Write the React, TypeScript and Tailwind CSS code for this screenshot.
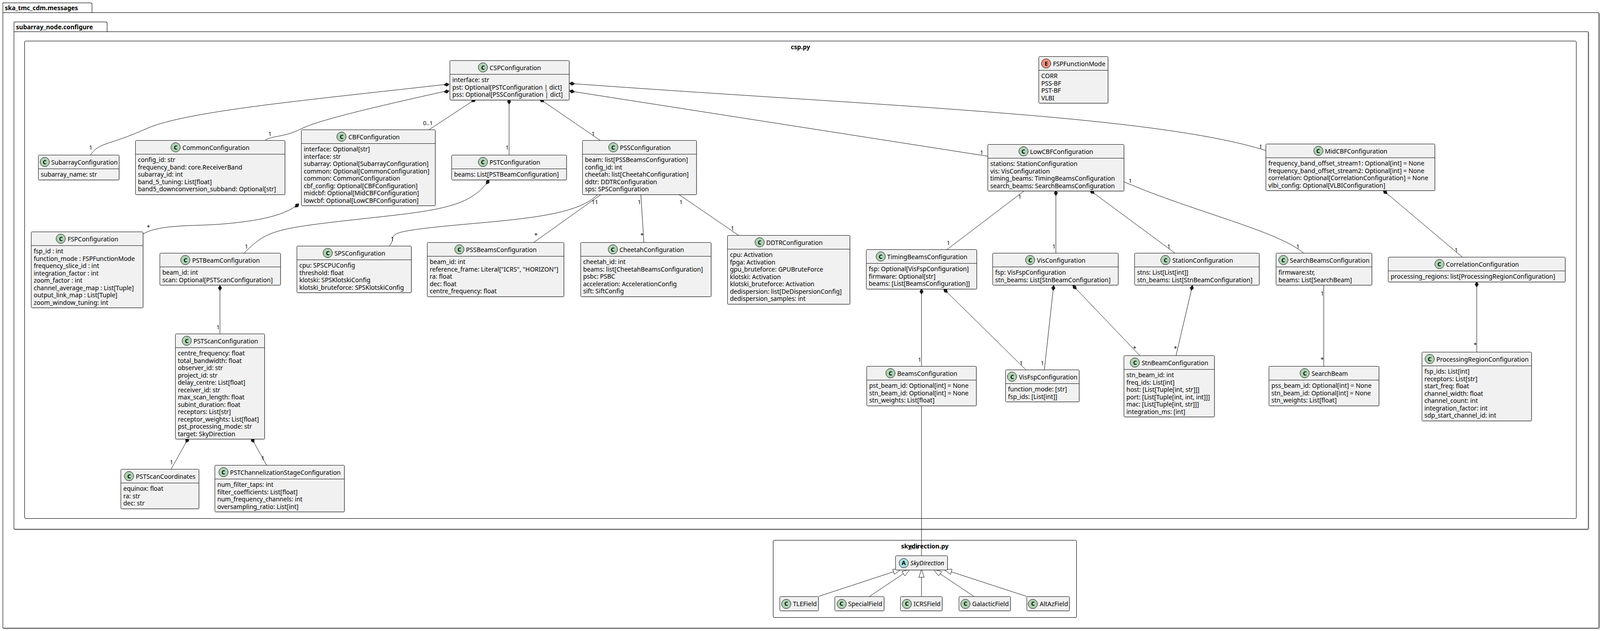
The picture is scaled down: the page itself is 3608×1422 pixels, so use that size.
import React from "react";

type Cls = { name: string; x: number; y: number; w: number; rows: string[]; kind?: "C" | "E" | "A" };

const classes: Cls[] = [
  { name: "CSPConfiguration", x: 1014, y: 136, w: 270, rows: ["interface: str", "pst: Optional[PSTConfiguration | dict]", "pss: Optional[PSSConfiguration | dict]"] },
  { name: "SubarrayConfiguration", x: 86, y: 349, w: 183, rows: ["subarray_name: str"] },
  { name: "CommonConfiguration", x: 305, y: 316, w: 338, rows: ["config_id: str", "frequency_band: core.ReceiverBand", "subarray_id: int", "band_5_tuning: List[float]", "band5_downconversion_subband: Optional[str]"] },
  { name: "CBFConfiguration", x: 679, y: 292, w: 303, rows: ["interface: Optional[str]", "interface: str", "subarray: Optional[SubarrayConfiguration]", "common: Optional[CommonConfiguration]", "common: CommonConfiguration", "cbf_config: Optional[CBFConfiguration]", "midcbf: Optional[MidCBFConfiguration]", "lowcbf: Optional[LowCBFConfiguration]"] },
  { name: "PSTConfiguration", x: 1018, y: 349, w: 260, rows: ["beams: List[PSTBeamConfiguration]"] },
  { name: "PSSConfiguration", x: 1313, y: 316, w: 258, rows: ["beam: list[PSSBeamsConfiguration]", "config_id: int", "cheetah: list[CheetahConfiguration]", "ddtr: DDTRConfiguration", "sps: SPSConfiguration"] },
  { name: "LowCBFConfiguration", x: 2227, y: 325, w: 308, rows: ["stations: StationConfiguration", "vis: VisConfiguration", "timing_beams: TimingBeamsConfiguration", "search_beams: SearchBeamsConfiguration"] },
  { name: "FSPFunctionMode", x: 2342, y: 127, w: 157, kind: "E", rows: ["CORR", "PSS-BF", "PST-BF", "VLBI"] },
  { name: "MidCBFConfiguration", x: 2854, y: 324, w: 382, rows: ["frequency_band_offset_stream1: Optional[int] = None", "frequency_band_offset_stream2: Optional[int] = None", "correlation: Optional[CorrelationConfiguration] = None", "vlbi_config: Optional[VLBIConfiguration]"] },
  { name: "FSPConfiguration", x: 70, y: 522, w: 253, rows: ["fsp_id : int", "function_mode : FSPFunctionMode", "frequency_slice_id : int", "integration_factor : int", "zoom_factor : int", "channel_average_map : List[Tuple]", "output_link_map : List[Tuple]", "zoom_window_tuning: int"] },
  { name: "PSTBeamConfiguration", x: 360, y: 570, w: 273, rows: ["beam_id: int", "scan: Optional[PSTScanConfiguration]"] },
  { name: "SPSConfiguration", x: 669, y: 554, w: 259, rows: ["cpu: SPSCPUConfig", "threshold: float", "klotski: SPSKlotskiConfig", "klotski_bruteforce: SPSKlotskiConfig"] },
  { name: "PSSBeamsConfiguration", x: 963, y: 546, w: 309, rows: ["beam_id: int", 'reference_frame: Literal["ICRS", "HORIZON"]', "ra: float", "dec: float", "centre_frequency: float"] },
  { name: "CheetahConfiguration", x: 1309, y: 546, w: 295, rows: ["cheetah_id: int", "beams: list[CheetahBeamsConfiguration]", "psbc: PSBC", "acceleration: AccelerationConfig", "sift: SiftConfig"] },
  { name: "DDTRConfiguration", x: 1640, y: 530, w: 277, rows: ["cpu: Activation", "fpga: Activation", "gpu_bruteforce: GPUBruteForce", "klotski: Activation", "klotski_bruteforce: Activation", "dedispersion: list[DeDispersionConfig]", "dedispersion_samples: int"] },
  { name: "TimingBeamsConfiguration", x: 1953, y: 562, w: 250, rows: ["fsp: Optional[VisFspConfiguration]", "firmware: Optional[str]", "beams: [List[BeamsConfiguration]]"] },
  { name: "VisConfiguration", x: 2238, y: 570, w: 284, rows: ["fsp: VisFspConfiguration", "stn_beams: List[StnBeamConfiguration]"] },
  { name: "StationConfiguration", x: 2558, y: 570, w: 282, rows: ["stns: List[List[int]]", "stn_beams: List[StnBeamConfiguration]"] },
  { name: "SearchBeamsConfiguration", x: 2877, y: 570, w: 217, rows: ["firmware:str,", "beams: List[SearchBeam]"] },
  { name: "CorrelationConfiguration", x: 3130, y: 579, w: 400, rows: ["processing_regions: list[ProcessingRegionConfiguration]"] },
  { name: "PSTScanConfiguration", x: 395, y: 752, w: 202, rows: ["centre_frequency: float", "total_bandwidth: float", "observer_id: str", "project_id: str", "delay_centre: List[float]", "receiver_id: str", "max_scan_length: float", "subint_duration: float", "receptors: List[str]", "receptor_weights: List[float]", "pst_processing_mode: str", "target: SkyDirection"] },
  { name: "BeamsConfiguration", x: 1954, y: 825, w: 248, rows: ["pst_beam_id: Optional[int] = None", "stn_beam_id: Optional[int] = None", "stn_weights: List[float]"] },
  { name: "VisFspConfiguration", x: 2267, y: 833, w: 167, rows: ["function_mode: [str]", "fsp_ids: [List[int]]"] },
  { name: "StnBeamConfiguration", x: 2534, y: 801, w: 205, rows: ["stn_beam_id: int", "freq_ids: List[int]", "host: [List[Tuple[int, str]]]", "port: [List[Tuple[int, int, int]]]", "mac: [List[Tuple[int, str]]]", "integration_ms: [int]"] },
  { name: "SearchBeam", x: 2861, y: 825, w: 249, rows: ["pss_beam_id: Optional[int] = None", "stn_beam_id: Optional[int] = None", "stn_weights: List[float]"] },
  { name: "ProcessingRegionConfiguration", x: 3206, y: 793, w: 248, rows: ["fsp_ids: List[int]", "receptors: List[str]", "start_freq: float", "channel_width: float", "channel_count: int", "integration_factor: int", "sdp_start_channel_id: int"] },
  { name: "PSTScanCoordinates", x: 272, y: 1057, w: 177, rows: ["equinox: float", "ra: str", "dec: str"] },
  { name: "PSTChannelizationStageConfiguration", x: 484, y: 1048, w: 293, rows: ["num_filter_taps: int", "filter_coefficients: List[float]", "num_frequency_channels: int", "oversampling_ratio: List[int]"] },
  { name: "SkyDirection", x: 2019, y: 1252, w: 118, kind: "A", rows: [] },
  { name: "TLEField", x: 1758, y: 1344, w: 88, rows: [] },
  { name: "SpecialField", x: 1882, y: 1344, w: 112, rows: [] },
  { name: "ICRSField", x: 2030, y: 1344, w: 95, rows: [] },
  { name: "GalacticField", x: 2162, y: 1344, w: 117, rows: [] },
  { name: "AltAzField", x: 2315, y: 1344, w: 97, rows: [] },
];

type Edge = { d: string; dia?: [number, number, number, number]; tri?: [number, number, number, number] };

const edges: Edge[] = [
  { d: "M1007 190 C 700 225 420 250 330 290 S 225 320 204 349", dia: [1013, 190, 700, 225] },
  { d: "M1007 205 C 850 240 720 270 680 290 S 615 305 598 316", dia: [1013, 205, 850, 240] },
  { d: "M1073 223 L 968 292", dia: [1073, 223, 968, 292] },
  { d: "M1148 223 L 1148 349", dia: [1148, 223, 1148, 349] },
  { d: "M1217 223 L 1353 316", dia: [1217, 223, 1353, 316] },
  { d: "M1284 205 L 2227 352", dia: [1284, 205, 2227, 352] },
  { d: "M1284 188 C 2000 240 2600 260 2854 339", dia: [1284, 188, 2000, 240] },
  { d: "M674 459 C 640 490 560 500 500 505 S 360 505 323 527", dia: [674, 459, 640, 490] },
  { d: "M1103 405 C 1060 470 980 475 800 495 S 600 520 551 570", dia: [1103, 405, 1060, 470] },
  { d: "M1349 437 C 1300 490 1150 495 1000 510 S 900 530 878 554" },
  { d: "M1357 437 L 1204 546" },
  { d: "M1445 437 L 1452 546" },
  { d: "M1529 437 L 1665 530" },
  { d: "M496 643 L 496 752", dia: [496, 643, 496, 752] },
  { d: "M425 987 L 386 1057", dia: [425, 987, 386, 1057] },
  { d: "M567 987 L 601 1048", dia: [567, 987, 601, 1048] },
  { d: "M2311 429 L 2136 562" },
  { d: "M2381 429 L 2381 570", dia: [2381, 429, 2381, 570] },
  { d: "M2458 429 L 2649 570", dia: [2458, 429, 2649, 570] },
  { d: "M2535 410 C 2700 480 2880 520 2939 570" },
  { d: "M3119 429 L 3297 579", dia: [3119, 429, 3297, 579] },
  { d: "M2078 651 L 2078 825", dia: [2078, 651, 2078, 825] },
  { d: "M2128 651 L 2313 833", dia: [2128, 651, 2313, 833] },
  { d: "M2376 643 L 2355 833", dia: [2376, 643, 2355, 833] },
  { d: "M2419 643 L 2570 801", dia: [2419, 643, 2570, 801] },
  { d: "M2689 643 L 2652 801", dia: [2689, 643, 2652, 801] },
  { d: "M2985 643 L 2985 825" },
  { d: "M3330 635 L 3330 793", dia: [3330, 635, 3330, 793] },
  { d: "M2078 914 L 2078 1252" },
  { d: "", tri: [2032, 1283, 1846, 1344] },
  { d: "", tri: [2052, 1283, 1961, 1344] },
  { d: "", tri: [2078, 1283, 2078, 1344] },
  { d: "", tri: [2105, 1283, 2196, 1344] },
  { d: "", tri: [2128, 1283, 2315, 1344] },
];

const labels: [string, number, number][] = [
  ["1", 201, 325], ["1", 605, 294], ["0..1", 954, 270], ["1", 1140, 325], ["1", 1334, 294],
  ["1", 2210, 336], ["1", 2839, 323], ["*", 331, 505], ["1", 552, 548], ["1", 881, 531],
  ["*", 1205, 523], ["*", 1444, 523], ["1", 1648, 507], ["11", 1334, 448], ["1", 1438, 448], ["1", 1532, 448],
  ["1", 488, 730], ["1", 383, 1034], ["1", 589, 1025], ["1", 2296, 436], ["1", 2135, 540],
  ["1", 2373, 548], ["1", 2632, 548], ["1", 2545, 400], ["1", 2923, 548], ["1", 3280, 556],
  ["1", 2070, 803], ["1", 2299, 811], ["1", 2347, 811], ["*", 2555, 778], ["*", 2647, 778],
  ["1", 2978, 654], ["*", 2978, 803], ["*", 3323, 770], ["0..1", 2050, 1226],
];

function diamond(x: number, y: number, tx: number, ty: number) {
  const L = Math.hypot(tx - x, ty - y) || 1;
  const dx = (tx - x) / L, dy = (ty - y) / L;
  const nx = -dy, ny = dx;
  const p = (a: number, b: number) => `${(x + dx * a + nx * b).toFixed(1)},${(y + dy * a + ny * b).toFixed(1)}`;
  return `${p(0, 0)} ${p(6, 4)} ${p(12, 0)} ${p(6, -4)}`;
}

function tri(x: number, y: number, tx: number, ty: number) {
  const L = Math.hypot(tx - x, ty - y) || 1;
  const dx = (tx - x) / L, dy = (ty - y) / L;
  const nx = -dy, ny = dx;
  const p = (a: number, b: number) => `${(x + dx * a + nx * b).toFixed(1)},${(y + dy * a + ny * b).toFixed(1)}`;
  return { pts: `${p(0, 0)} ${p(18, 6)} ${p(18, -6)}`, bx: x + dx * 18, by: y + dy * 18 };
}

function Icon({ kind }: { kind: "C" | "E" | "A" }) {
  const bg = kind === "C" ? "bg-[#ADD1B2]" : kind === "E" ? "bg-[#EB937F]" : "bg-[#A9DCDF]";
  return (
    <div className={`w-[22px] h-[22px] shrink-0 rounded-full border border-[#181818] ${bg} flex items-center justify-center text-[13px] font-bold leading-none text-black`}>
      {kind}
    </div>
  );
}

function ClassBox({ c }: { c: Cls }) {
  const kind = c.kind ?? "C";
  return (
    <div
      className="absolute bg-[#F1F1F1] border border-[#181818] rounded-[2.5px] box-border text-[14px] text-black shadow-[1px_1px_2px_rgba(0,0,0,0.15)]"
      style={{ left: c.x, top: c.y, width: c.w }}
    >
      <div className={`h-[31px] flex items-center justify-center gap-[4px] px-[3px] ${c.rows.length ? "border-b border-[#181818]" : ""}`}>
        <Icon kind={kind} />
        <span className={`whitespace-nowrap ${kind === "A" ? "italic" : ""}`}>{c.name}</span>
      </div>
      {c.rows.length > 0 && (
        <div className="pt-[4px] pb-[3px] px-[5px]">
          {c.rows.map((r, i) => (
            <div key={i} className="h-[16.5px] leading-[16.5px] whitespace-nowrap">{r}</div>
          ))}
        </div>
      )}
    </div>
  );
}

export default function App() {
  return (
    <div className="relative w-[3608px] h-[1422px] bg-white overflow-hidden font-['DejaVu_Sans',sans-serif] text-black">
      {/* outer package */}
      <div className="absolute left-[6px] top-[6px] w-[202px] h-[23px] border-[1.5px] border-b-0 border-black rounded-tr-[3px] px-[4px] text-[14px] font-bold leading-[21px] bg-white">ska_tmc_cdm.messages</div>
      <div className="absolute left-[6px] top-[28px] w-[3600px] h-[1388px] border-[1.5px] border-black rounded-br-[3px] shadow-[2px_2px_0_rgba(0,0,0,0.25)]" />
      {/* inner package */}
      <div className="absolute left-[31px] top-[49px] w-[211px] h-[23px] border-[1.5px] border-b-0 border-black rounded-tr-[3px] px-[4px] text-[14px] font-bold leading-[21px] bg-white">subarray_node.configure</div>
      <div className="absolute left-[31px] top-[71px] w-[3551px] h-[1122px] border-[1.5px] border-black rounded-br-[3px] shadow-[2px_2px_0_rgba(0,0,0,0.25)]" />
      {/* csp.py */}
      <div className="absolute left-[55px] top-[92px] w-[3500px] h-[1077px] border border-black rounded-[3px] flex justify-center pt-[2px]">
        <span className="text-[14px] font-bold">csp.py</span>
      </div>
      {/* skydirection.py */}
      <div className="absolute left-[1743px] top-[1217px] w-[685px] h-[175px] border border-black rounded-[3px] flex justify-center pt-[2px]">
        <span className="text-[14px] font-bold">skydirection.py</span>
      </div>

      <svg className="absolute left-0 top-0" width={3608} height={1422}>
        {edges.map((e, i) => (
          <g key={i}>
            {e.d && <path d={e.d} fill="none" stroke="#181818" strokeWidth={1} />}
            {e.dia && <polygon points={diamond(...e.dia)} fill="#181818" stroke="#181818" />}
            {e.tri && (() => {
              const t = tri(...e.tri);
              return (
                <>
                  <line x1={t.bx} y1={t.by} x2={e.tri[2]} y2={e.tri[3]} stroke="#181818" />
                  <polygon points={t.pts} fill="none" stroke="#181818" />
                </>
              );
            })()}
          </g>
        ))}
      </svg>

      {classes.map((c) => (
        <ClassBox key={c.name} c={c} />
      ))}

      {labels.map(([t, x, y], i) => (
        <span key={i} className="absolute text-[13px] leading-[15px] whitespace-nowrap" style={{ left: x, top: y }}>{t}</span>
      ))}
    </div>
  );
}
